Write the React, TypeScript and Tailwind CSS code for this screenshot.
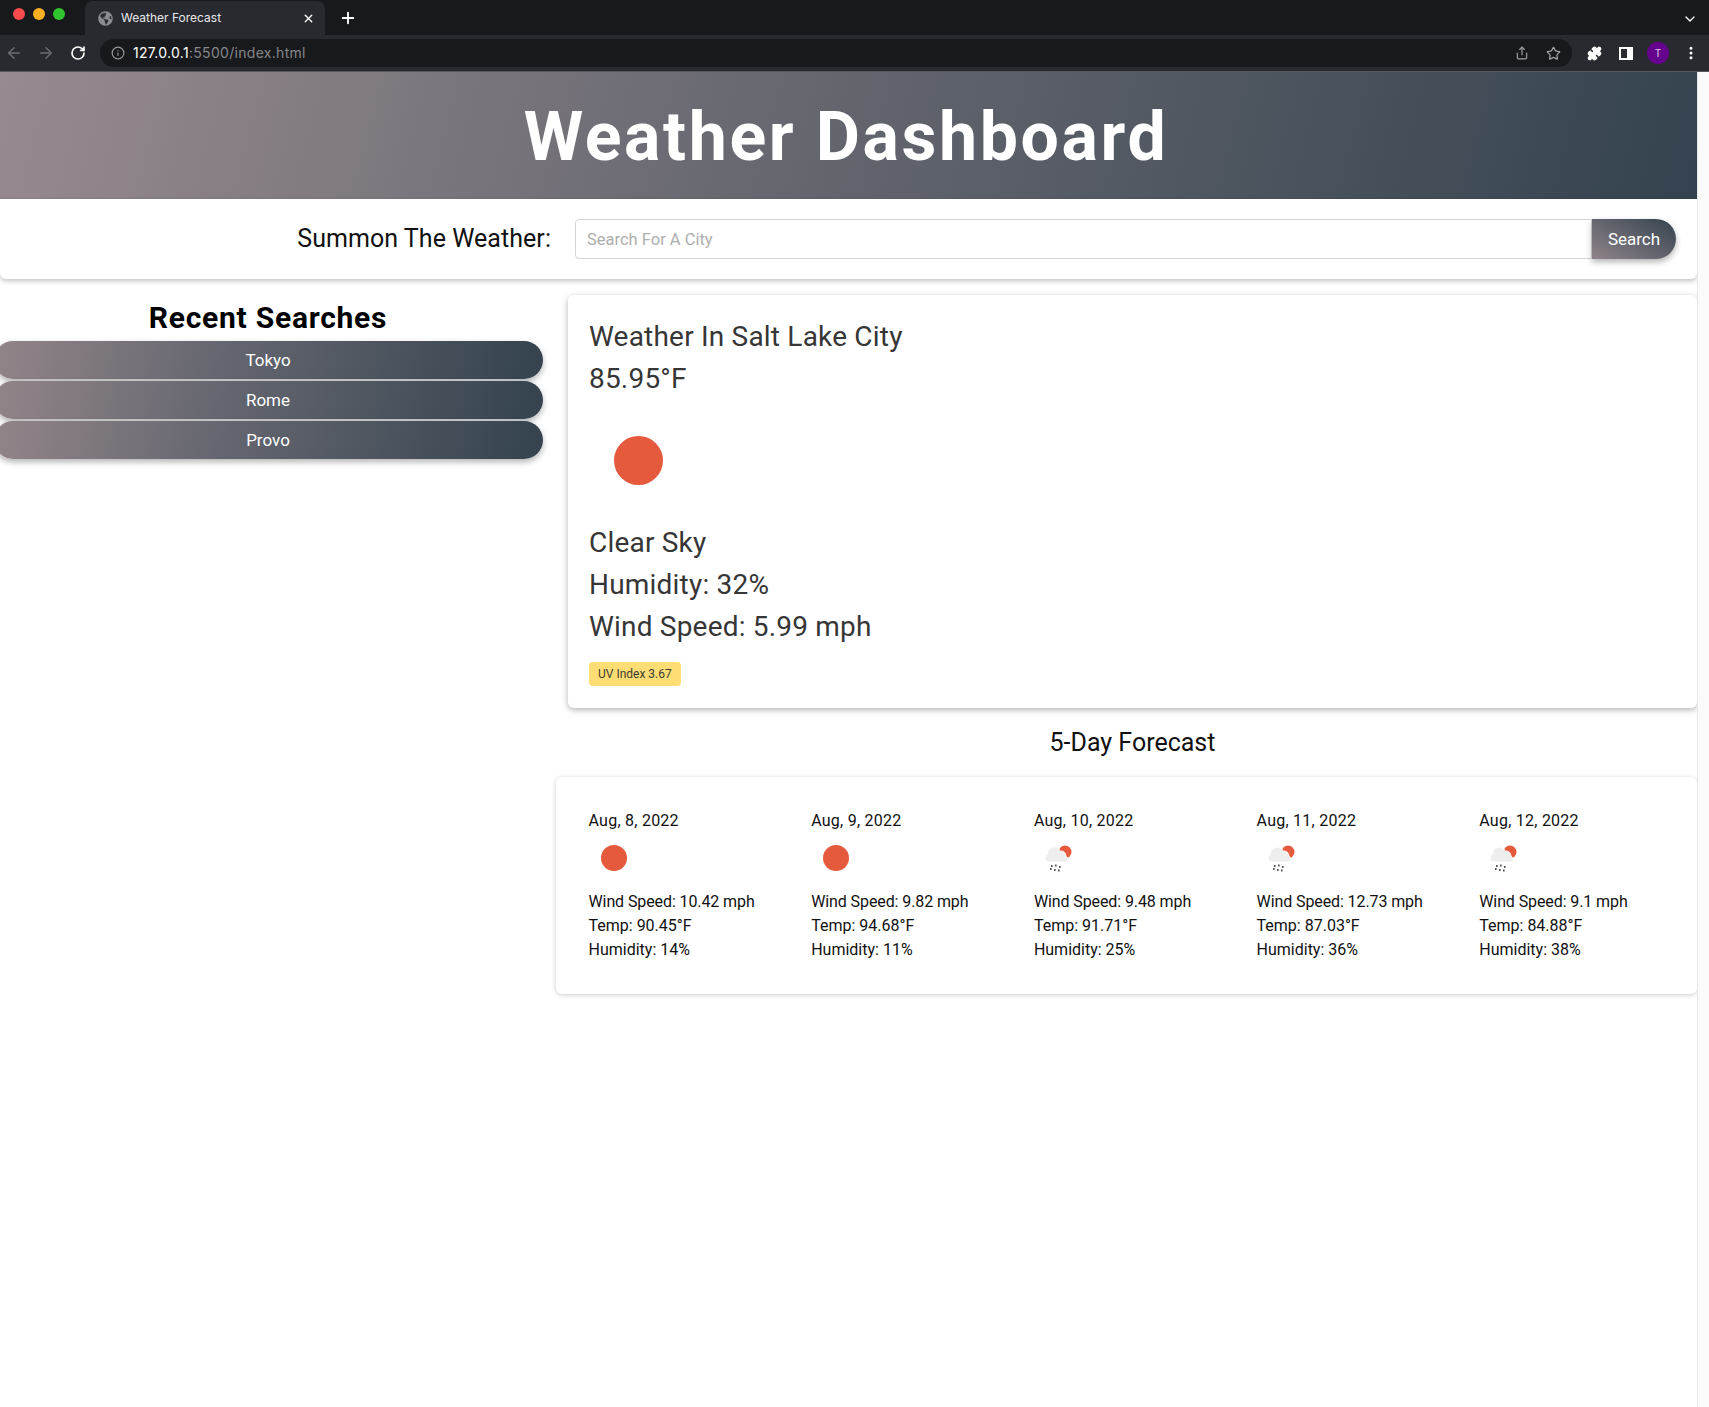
import { ArrowLeft, ArrowRight, ChevronDown, Info, Plus, RotateCw, Share, Star, X, EllipsisVertical, Puzzle } from "lucide-react";
import { FaGlobeAmericas } from "react-icons/fa";

const forecast = [
  { date: "Aug, 8, 2022", wind: "10.42", temp: "90.45", humidity: "14", icon: "sun" },
  { date: "Aug, 9, 2022", wind: "9.82", temp: "94.68", humidity: "11", icon: "sun" },
  { date: "Aug, 10, 2022", wind: "9.48", temp: "91.71", humidity: "25", icon: "rain" },
  { date: "Aug, 11, 2022", wind: "12.73", temp: "87.03", humidity: "36", icon: "rain" },
  { date: "Aug, 12, 2022", wind: "9.1", temp: "84.88", humidity: "38", icon: "rain" },
];

const RainIcon = () => (
  <svg width="50" height="50" viewBox="0 0 50 50">
    <circle cx="31" cy="19" r="6.5" fill="#e5593c" />
    <path
      d="M15 29a4 4 0 0 1-1.500-7.700 6 6 0 0 1 5-6.800 5.500 5.500 0 0 1 7.500 3.500 5 5 0 0 1 6 5 3.500 3.500 0 0 1 0 6Z"
      fill="#eeeeee"
      stroke="#ffffff"
      strokeWidth="0.8"
    />
    <g fill="#555">
      <rect x="17" y="32" width="1.600" height="2" />
      <rect x="21" y="31.500" width="1.600" height="2" />
      <rect x="25" y="33" width="1.600" height="2" />
      <rect x="16" y="35" width="1.600" height="2" />
      <rect x="20" y="36" width="1.600" height="2" />
      <rect x="24" y="36.500" width="1.600" height="2" />
    </g>
  </svg>
);

const BrowserChrome = () => (
  <div className="font-['Inter',sans-serif]">
    <div className="flex h-[35px] items-end bg-[#18191c]">
      <div className="flex h-[35px] items-start gap-[8px] pl-[13px] pt-[8px]">
        <span className="size-3 rounded-full bg-[#f94b4b]" />
        <span className="size-3 rounded-full bg-[#fbb024]" />
        <span className="size-3 rounded-full bg-[#30c42f]" />
      </div>
      <div className="ml-[20px] flex h-[34px] w-[240px] items-center rounded-t-lg bg-[#292a2f] pl-[13px] pr-[10px]">
        <FaGlobeAmericas className="size-[15px] text-[#8a8c91]" />
        <span className="ml-[8px] flex-1 text-xs text-[#e8e8ea]">Weather Forecast</span>
        <X className="size-[13px] text-white" strokeWidth={2.5} />
      </div>
      <Plus className="mb-[8px] ml-[14px] size-[18px] text-white" strokeWidth={2.5} />
      <ChevronDown className="mb-[8px] ml-auto mr-[11px] size-[16px] text-white" strokeWidth={2} />
    </div>
    <div className="flex h-[37px] items-center border-b-[1px] border-[#55565a] bg-[#292a2f]">
      <ArrowLeft className="ml-[5px] size-[18px] text-[#6b6c70]" strokeWidth={2} />
      <ArrowRight className="ml-[14px] size-[18px] text-[#6b6c70]" strokeWidth={2} />
      <RotateCw className="ml-[15px] size-[16px] text-white" strokeWidth={2.5} />
      <div className="ml-[14px] flex h-[28px] w-[1472px] items-center rounded-full bg-[#18191c] pl-[11px] pr-[11px]">
        <Info className="size-[14px] text-[#9a9b9f]" />
        <span className="ml-[8px] text-sm tracking-[0.3px] text-white">
          127.0.0.1<span className="text-[#85868a]">:5500/index.html</span>
        </span>
        <Share className="ml-auto size-[14px] text-[#a0a1a5]" />
        <Star className="ml-[17px] size-[15px] text-[#a0a1a5]" />
      </div>
      <Puzzle className="ml-[15px] size-[15px] fill-white text-white" />
      <span className="ml-[17px] h-[13px] w-[14px] border-[2px] border-r-[6px] border-white" />
      <span className="ml-[14px] flex size-[22px] items-center justify-center rounded-full bg-[#65038f] text-[10px] text-[#e0c4ee]">
        T
      </span>
      <EllipsisVertical className="ml-[14px] size-[16px] text-white" strokeWidth={2.5} />
    </div>
  </div>
);

export default function App() {
  return (
    <div className="flex min-h-[1407px] flex-col overflow-hidden bg-white font-['Roboto',sans-serif] text-[#111]">
      <BrowserChrome />
      <div className="flex flex-1">
        <div className="w-[1697px]">
          <header className="flex h-[127px] items-center justify-center bg-[linear-gradient(105deg,#978a90_0%,#6a6a72_42%,#34434f_100%)] pr-[5px] pt-[2px]">
            <h1 className="text-[68px] font-bold tracking-[2.6px] text-white">Weather Dashboard</h1>
          </header>

          <div className="flex h-[80px] items-center rounded-b-md bg-white pr-[21px] shadow-[0_2px_5px_rgba(0,0,0,0.25)]">
            <label className="w-[551px] text-right text-[25px] tracking-[0.05px]">Summon The Weather:</label>
            <input
              className="ml-[24px] h-[40px] flex-1 rounded-l-[4px] border border-[#d5d5d5] px-[11px] text-[16.500px] placeholder:text-[#aeaeae]"
              placeholder="Search For A City"
            />
            <button className="h-[40px] w-[84px] rounded-r-[20px] bg-[linear-gradient(30deg,#8f8389_0%,#34434f_100%)] pt-[1px] text-[17px] text-white shadow-[0_3px_6px_rgba(0,0,0,0.3)]">
              Search
            </button>
          </div>

          <div className="flex items-start">
            <aside className="w-[556px] shrink-0 pt-[17px]">
              <h2 className="w-[536px] text-center text-[30px] font-bold leading-[44px] tracking-[0.75px] text-black">Recent Searches</h2>
              <div className="-ml-[6px] flex flex-col gap-[2px] pt-[1px]">
                {["Tokyo", "Rome", "Provo"].map((city) => (
                  <button
                    key={city}
                    className="h-[38px] w-[549px] rounded-[19px] bg-[linear-gradient(100deg,#928589_0%,#666770_40%,#34434f_100%)] pr-[1px] pt-[1px] text-[17px] text-white shadow-[0_3px_6px_rgba(0,0,0,0.3)]"
                  >
                    {city}
                  </button>
                ))}
              </div>
            </aside>

            <main className="min-w-0 flex-1 pt-[16px]">
              <section className="ml-[12px] h-[413px] rounded-md bg-white px-[21px] pt-[21px] text-[28px] leading-[42px] tracking-[0.2px] text-[#363636] shadow-[0_2px_6px_rgba(0,0,0,0.3)]">
                <p>Weather In Salt Lake City</p>
                <p>85.95°F</p>
                <div className="flex h-[121px] items-center pl-[25px]">
                  <span className="size-[49px] rounded-full bg-[#e5593c]" />
                </div>
                <p className="pt-[1px]">Clear Sky</p>
                <p>Humidity: 32%</p>
                <p>Wind Speed: 5.99 mph</p>
                <span className="mt-[12px] inline-flex h-[24px] items-center rounded-[4px] bg-[#ffdd75] px-[9px] text-xs tracking-normal text-[#3c3c2e]">
                  UV Index 3.67
                </span>
              </section>

              <h3 className="ml-[12px] pt-[18px] text-center text-[25px] leading-[34px] text-[#111]">5-Day Forecast</h3>

              <section className="mt-[17px] grid h-[217px] grid-cols-[repeat(5,222.700px)] rounded-md bg-white pl-[32.500px] pt-[32px] shadow-[0_1px_5px_rgba(0,0,0,0.2)]">
                {forecast.map((day) => (
                  <div key={day.date} className="text-base leading-[24px]">
                    <p className="tracking-[0.25px]">{day.date}</p>
                    <div className="flex h-[49px] w-[50px] items-center justify-center">
                      {day.icon === "sun" ? (
                        <span className="size-[26px] rounded-full bg-[#e5593c]" />
                      ) : (
                        <RainIcon />
                      )}
                    </div>
                    <p className="pt-[8px] tracking-[-0.1px]">Wind Speed: {day.wind} mph</p>
                    <p>Temp: {day.temp}°F</p>
                    <p>Humidity: {day.humidity}%</p>
                  </div>
                ))}
              </section>
            </main>
          </div>
        </div>
        <div className="flex-1 border-l border-[#e8e8e8] bg-[#fafafa]" />
      </div>
    </div>
  );
}
